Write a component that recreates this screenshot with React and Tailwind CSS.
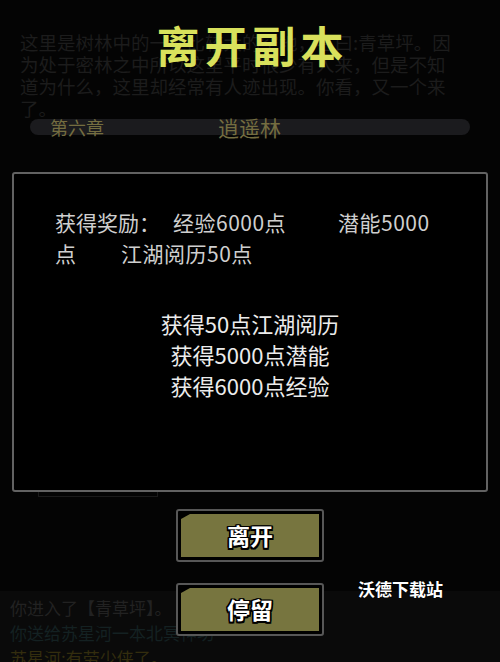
import React from "react";

const cjk = { fontFamily: '"Noto Sans CJK SC", "Noto Sans", sans-serif' };

function MapBox({ className, children }) {
  return (
    <div className={"absolute flex items-center justify-center border border-[#141414] text-[19px] text-[#1b1b1b] " + className}>
      {children}
    </div>
  );
}

function GameButton({ label }) {
  return (
    <div className="w-[148px] h-[53px] rounded-[3px] border-2 border-[#575757] bg-black p-[3px]">
      <div className="h-full w-full bg-[#77753f] [clip-path:polygon(9px_0,100%_0,100%_100%,0_100%,0_5px)] flex items-center justify-center">
        <span className="text-[23px] font-bold text-white leading-none [text-shadow:-1.5px_-1.5px_0_#000,1.5px_-1.5px_0_#000,-1.5px_1.5px_0_#000,1.5px_1.5px_0_#000,0_1.5px_0_#000,0_-1.5px_0_#000,1.5px_0_0_#000,-1.5px_0_0_#000]">
          {label}
        </span>
      </div>
    </div>
  );
}

export default function App() {
  return (
    <div className="relative w-[500px] h-[662px] overflow-hidden bg-[#040404]" style={cjk}>
      {/* dimmed game screen underneath */}
      <div className="flex flex-col h-full">
        <div className="pt-[31px] px-[20px] text-[18.5px] leading-[22px] text-[#1c1c1c] whitespace-nowrap">
          <div>这里是树林中的一处比较大的空地，名曰:青草坪。因</div>
          <div>为处于密林之中所以这里平时很少有人来，但是不知</div>
          <div>道为什么，这里却经常有人迹出现。你看，又一个来</div>
          <div>了。</div>
        </div>
        <div className="mx-[30px] h-[16px] rounded-full bg-[#1b1b1e] relative flex items-center">
          <span className="ml-[20px] text-[18px] text-[#746d40] leading-none">第六章</span>
          <span className="absolute left-[188px] text-[21px] text-[#746d40] leading-none">逍遥林</span>
        </div>
        <div className="relative h-[290px] shrink-0">
          <div className="absolute right-[36px] top-[63px] text-[19px] text-[#1b1b1b]">查看全图</div>
          <MapBox className="left-[190px] top-[98px] w-[120px] h-[42px]">林间小道</MapBox>
          <div className="absolute left-[250px] top-[140px] w-px h-[24px] bg-[#141414]" />
          <MapBox className="left-[190px] top-[164px] w-[120px] h-[46px]">青草坪</MapBox>
          <div className="absolute left-[150px] top-[187px] w-[40px] h-px bg-[#141414]" />
          <div className="absolute left-[310px] top-[187px] w-[38px] h-px bg-[#141414]" />
          <MapBox className="left-[36px] top-[164px] w-[114px] h-[46px] border-transparent">林间小道</MapBox>
          <MapBox className="left-[348px] top-[164px] w-[116px] h-[46px]">林间小道</MapBox>
          <div className="absolute left-[250px] top-[210px] w-px h-[50px] bg-[#111]" />
        </div>
        <div className="pl-[38px] text-[18px] leading-[22px] text-[#1b1b1b]">这里有：</div>
        <div className="ml-[38px] mt-[10px] w-[120px] h-[40px] shrink-0 border border-[#1a1a1a] flex items-center justify-center text-[19px] text-[#1e1e1e]">
          苏星河
        </div>
        <div className="h-[94px] shrink-0" />
        <div className="flex-1 bg-[#0a0a0a] pl-[10px] pt-[4px] text-[17px] leading-[25px] whitespace-nowrap">
          <div className="text-[#222]">你进入了【青草坪】。</div>
          <div className="text-[#142122]">你送给苏星河一本北冥神功</div>
          <div className="text-[#332d0e]">苏星河:有劳少侠了。</div>
        </div>
      </div>

      {/* dialog overlay */}
      <div className="absolute inset-0 flex flex-col items-center pt-[22px]">
        <div className="text-[43px] leading-[44px] font-bold text-[#d9e15c] tracking-[5px] pl-[5px]">
          离开副本
        </div>
        <div className="mt-[106px] w-[476px] h-[320px] rounded-[3px] border-2 border-[#626262] bg-black pt-[33px] pl-[41px]">
          <div className="text-[21px] leading-[31px] text-[#cfcfcf] whitespace-nowrap">
            <div className="flex">
              <span className="w-[118px]">获得奖励：</span>
              <span className="w-[165px] tracking-[0.5px]">经验6000点</span>
              <span className="tracking-[0.5px]">潜能5000</span>
            </div>
            <div className="flex">
              <span className="w-[66px]">点</span>
              <span className="tracking-[0.5px]">江湖阅历50点</span>
            </div>
          </div>
          <div className="mt-[39px] -ml-[41px] flex flex-col items-center text-[22px] leading-[31px] text-[#ececec]">
            <div>获得50点江湖阅历</div>
            <div>获得5000点潜能</div>
            <div>获得6000点经验</div>
          </div>
        </div>
        <div className="mt-[17px]">
          <GameButton label="离开" />
        </div>
        <div className="mt-[21px]">
          <GameButton label="停留" />
        </div>
      </div>

      <div className="absolute left-[358px] top-[578px] text-[17px] font-bold text-white leading-[22px] [text-shadow:0_0_1px_#000]">
        沃德下载站
      </div>
    </div>
  );
}
